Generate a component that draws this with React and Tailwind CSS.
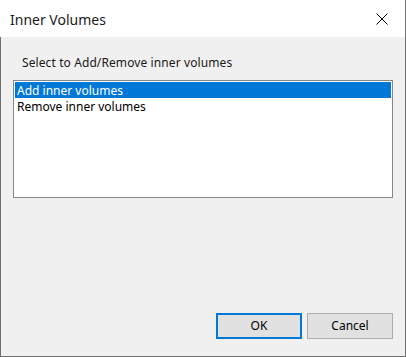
export default function App() {
  const items = ["Add inner volumes", "Remove inner volumes"];
  const font = { fontFamily: '"Noto Sans", "Open Sans", sans-serif' };

  return (
    <div className="w-[406px] h-[357px] flex flex-col bg-[#f0f0f0] text-black" style={font}>
      {/* Title bar */}
      <div className="h-[37px] shrink-0 bg-white flex items-center justify-between pl-[10px] pr-[17px] border-r border-[#707070]">
        <span className="text-[14px] text-[#1a1a1a] pt-[1px]">Inner Volumes</span>
        <svg width="12" height="12" viewBox="0 0 12 12" className="text-black">
          <path d="M0.5 0.5 L11.5 11.5 M11.5 0.5 L0.5 11.5" stroke="currentColor" strokeWidth="1" fill="none" />
        </svg>
      </div>

      {/* Body */}
      <div className="flex-1 flex flex-col border-l border-r border-b border-[#707070] pl-[12px] pr-[12px] pb-[17px]">
        <div className="pl-[9px] pt-[18px] h-[43px] text-[12px] leading-[16px] text-[#1a1a1a] tracking-[0.1px]">
          Select to Add/Remove inner volumes
        </div>

        <div className="h-[118px] w-[380px] border border-[#828790] bg-white p-px">
          {items.map((item, i) => (
            <div
              key={item}
              className={`h-[16px] pl-[2px] text-[12px] leading-[17px] ${
                i === 0 ? "bg-[#0078d7] text-white" : "text-black"
              }`}
            >
              {item}
            </div>
          ))}
        </div>

        <div className="flex-1" />

        <div className="flex justify-end gap-[5px]">
          <button className="w-[86px] h-[26px] bg-[#e1e1e1] border-2 border-[#0078d7] text-[12px] text-black">
            OK
          </button>
          <button className="w-[86px] h-[26px] bg-[#e1e1e1] border border-[#adadad] text-[12px] text-black">
            Cancel
          </button>
        </div>
      </div>
    </div>
  );
}
